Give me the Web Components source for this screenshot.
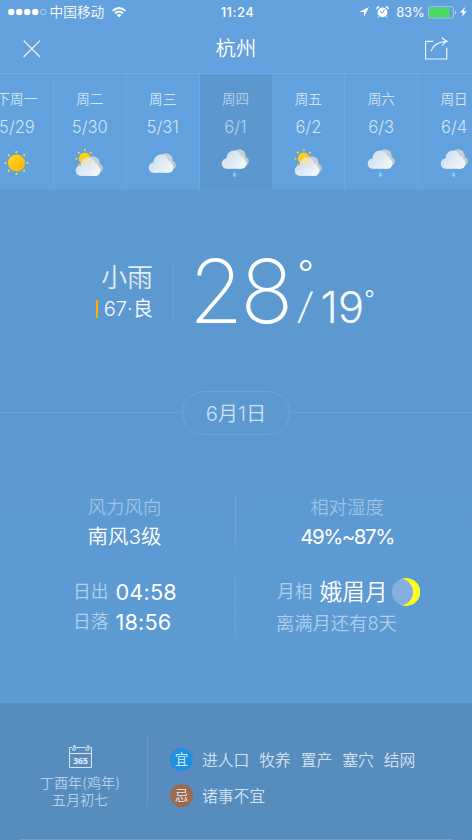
<!DOCTYPE html>
<html lang="zh-CN"><head><meta charset="utf-8"><title>杭州</title>
<style>
html,body{margin:0;width:472px;height:840px;overflow:hidden}
body{font-family:Inter,"Noto Sans CJK SC",sans-serif;font-weight:350;color:#fff}
</style></head><body><weather-page></weather-page>
<script>
const define=(name,html)=>customElements.define(name,class extends HTMLElement{
  constructor(){super();this.attachShadow({mode:'open'}).innerHTML=html;}
});
define('status-bar',`<style>
:host{display:grid;grid-template-columns:1fr auto 1fr;align-items:center;height:24px;font-size:13px;line-height:16px}
.l,.r{display:flex;align-items:center}.l{padding-left:7.5px}.r{justify-content:flex-end;padding-right:5px}
.t{font-weight:500;font-size:13px;letter-spacing:.5px;padding-left:3px}
.c{margin-left:3px;font-size:13.7px}.w{margin-left:8px}.p{margin:0 3.5px 0 7px;font-size:13px;font-weight:400;letter-spacing:-.2px}
svg{display:block}</style>
<div class="l"><svg width="39" height="8" viewBox="0 0 39 8"><g fill="#fff"><circle cx="3.3" cy="4" r="3.2"/><circle cx="11.3" cy="4" r="3.2"/><circle cx="19.3" cy="4" r="3.2"/><circle cx="27.3" cy="4" r="3.2"/></g><circle cx="35.3" cy="4" r="2.8" fill="none" stroke="#d4e5f7" stroke-width=".7"/></svg><span class="c">中国移动</span>
<svg class="w" width="14" height="11" viewBox="0 0 14 11"><g fill="none" stroke="#fff" stroke-width="1.8"><path d="M.6 3.9Q7-1.9 13.4 3.9"/><path d="M2.9 6.4Q7 2.7 11.1 6.4"/></g><path d="M4.6 8.1Q7 6.1 9.4 8.1L7 10.6Z" fill="#fff"/></svg></div>
<span class="t">11:24</span>
<div class="r"><svg width="10" height="10" viewBox="0 0 10 10"><path d="M10 0L0 5.1H4.9V10Z" fill="#fff"/></svg>
<svg style="margin-left:7px" width="13" height="12" viewBox="0 0 13 12"><circle cx="6.5" cy="6.4" r="4.9" fill="#fff"/><path d="M.8 3.2Q1 1 3.2.8M12.2 3.2Q12 1 9.8.8" stroke="#fff" stroke-width="1.4" fill="none"/><path d="M3.9 5.4L6.5 7L8.5 3.6" fill="none" stroke="#629fda" stroke-width="1"/><path d="M3 10.2L2 11.7M10 10.2L11 11.7" stroke="#fff"/></svg>
<span class="p">83%</span>
<svg width="29" height="13" viewBox="0 0 29 13"><rect x=".5" y=".7" width="25" height="11.4" rx="1.8" fill="none" stroke="#a5c9eb"/><rect x="1.2" y="1.4" width="20.5" height="10" rx="1" fill="#4cd964"/><path d="M27 4.3Q29.5 6.5 27 8.7Z" fill="#c6ddf3"/></svg>
<svg style="margin-left:3px" width="7" height="10" viewBox="0 0 7 10"><path d="M5 0L0 5.4H3L1.6 10L7 4.2H4Z" fill="#fff"/></svg></div>`);
define('title-bar',`<style>
:host{display:flex;justify-content:space-between;align-items:center;height:49px;padding:0 24px 0 23px;box-sizing:border-box}
.h{font-size:20.4px;line-height:30px;padding-left:7px}svg{display:block}</style>
<svg width="18" height="18" viewBox="0 0 18 18"><path d="M.7.7L17 17M17 .7L.7 17" stroke="#edf5fc" stroke-width="1.2"/></svg><div class="h"><slot></slot></div>
<svg width="24" height="23" viewBox="0 0 24 23" fill="none" stroke="#edf5fc" stroke-width="1.2"><path d="M9.2 4.4H1.6V22H22.8V10.8"/><path d="M7 14.4C8.7 8.8 14 4.8 22.7 4.3M17.8 .5Q20 3 23 4.3Q20 5.5 18.2 8.7"/></svg>`);
const cloud=(dx,dy)=>`<g transform="translate(${dx} ${dy})"><circle cx="17.3" cy="6.8" r="6.8" fill="#c9ced5"/><circle cx="23.2" cy="12" r="4" fill="url(#gray)"/><g fill="url(#cl)"><circle cx="5.3" cy="14.3" r="5.3"/><circle cx="12.2" cy="8.8" r="7.4"/><circle cx="19.6" cy="14.4" r="5.2"/><circle cx="19.3" cy="9.8" r="2.8"/><path d="M5.3 9H20V19.6H5.3Z"/></g></g>`;
const sun=(x,y,r)=>`<circle cx="${x}" cy="${y}" r="${r}" fill="url(#su)"/><g stroke="#f8d532" stroke-width="${r>7?2:1.6}">${[0,45,90,135,180,225,270,315].map(a=>`<path transform="rotate(${a} ${x} ${y})" d="M${x} ${y-r-1.4}v-2.1"/>`).join('')}</g>`;
customElements.define('weather-icon',class extends HTMLElement{
 constructor(){super();this.attachShadow({mode:'open'});}
 connectedCallback(){const k=this.getAttribute('kind');let b='';
 if(k==='sun')b=sun(17.5,15,8.5);
 if(k==='partly')b=sun(12.9,10.7,6.1)+cloud(3.7,8.3)+`<circle cx="15" cy="13.2" r="4.6" fill="#ffe28c" opacity=".5"/>`;
 if(k==='cloud')b=cloud(3.7,5.2);
 if(k==='rain')b=cloud(3.7,1.2)+`<path d="M16.4 23.4Q20 28.8 16.6 28.8Q13.4 28.6 16.4 23.4" fill="#74d3ff"/>`;
 this.shadowRoot.innerHTML=`<style>:host{display:block;width:34px;height:32px;margin-left:-1px}svg{display:block}</style><svg width="34" height="32" viewBox="0 0 34 32"><defs><linearGradient id="cl" gradientUnits="userSpaceOnUse" x1="3" y1="3" x2="21" y2="20"><stop stop-color="#c9ddf0"/><stop offset="1" stop-color="#f5f7f8"/></linearGradient><linearGradient id="gray"><stop stop-color="#d9dde2"/><stop offset="1" stop-color="#b8c1cc"/></linearGradient><linearGradient id="su" x1="0" y1="0" x2="1" y2="1"><stop stop-color="#ffdb22"/><stop offset="1" stop-color="#ffb000"/></linearGradient></defs>${b}</svg>`;}
});
define('day-cell',`<style>
:host{display:flex;flex-direction:column;align-items:center;box-sizing:border-box;width:72.86px;height:117px;padding-top:15px;border-right:1px solid #6ca8df;background:#61a1dd;color:#d4e5f6}
:host([selected]){background:#5c98cf;color:#b9d2ea;border-color:#5c98cf}
.d{font-size:13.6px;line-height:20px;height:20px;white-space:nowrap}.n{margin-top:8px;font-size:16.6px;line-height:20px;height:20px;margin-bottom:11px}
</style><div class="d"><slot></slot></div><div class="n"><slot name="date"></slot></div><slot name="icon"></slot>`);
define('day-strip',`<style>:host{display:flex;height:117px;border-top:1px solid #6fabdf;border-bottom:1px solid #619dd5;margin-left:-19px;width:510px;box-sizing:border-box;overflow:hidden}slot{display:contents}</style><slot></slot>`);
define('temp-hero',`<style>
:host{display:flex;height:200px;box-sizing:border-box;padding-top:71px;align-items:flex-start}
.l{width:153px;text-align:right;height:62px}.a{font-size:25.9px;line-height:33px;color:#e2edf8}
.b{display:flex;justify-content:flex-end;align-items:center;font-size:20.2px;line-height:30px;color:#f8fafd}
.b i{width:2px;height:18px;background:#ffae00;margin-right:6px}
.v{width:1px;height:62px;background:#6ba2d6;margin:0 15px 0 20px}
.t{display:flex;align-items:flex-start;font-weight:200}
.big{font-size:88px;line-height:62px;height:62px;letter-spacing:-3px;font-weight:200;margin-top:-1px}
.deg{font-size:36px;line-height:34px;height:34px;margin:-5px 0 0 7px;width:1.5px;font-weight:300}
.s{font-size:36px;line-height:40px;font-weight:300;margin-top:25px;width:21.5px;color:#eef5fb}.s b{display:inline-block;font-weight:inherit;transform:skewX(-9deg)}
.low{font-size:44px;line-height:46px;font-weight:300;margin-top:23px;letter-spacing:0;color:#f4f9fd}
.d2{font-size:23px;line-height:22px;font-weight:300;margin-top:27px}
</style><div class="l"><div class="a">小雨</div><div class="b"><i></i><span>67·良</span></div></div><div class="v"></div>
<div class="t"><span class="big">28</span><span class="deg">°</span><span class="s"><b>/</b></span><span class="low">19</span><span class="d2">°</span></div>`);
define('date-pill',`<style>:host{display:flex;align-items:center;height:45px}
i{flex:1;height:1px;background:#6aa3d9}b{font-weight:350;font-size:20.3px;line-height:44px;height:42px;width:106px;text-align:center;border:1px solid #6ea5da;border-radius:23px;color:#d0e1f3}</style><i></i><b><slot></slot></b><i></i>`);
define('detail-grid',`<style>
:host{display:grid;grid-template-columns:235px 1px 236px;grid-template-rows:54px 58px;row-gap:28px;padding-top:60px;height:268px;box-sizing:border-box;background:linear-gradient(#5c99d1,#5d9bd5)}
.v{background:#6ea5d9}.c{display:flex;flex-direction:column;align-items:center}.k{font-size:18.4px;line-height:24px;color:#9dc2e6}
.x{font-size:20.5px;line-height:32px;margin-top:2px}.h{letter-spacing:-1.5px;font-weight:400}.left{width:249px}.right{padding-right:14px}
.r{display:flex;align-items:center;line-height:30px;height:30px}.r .k{font-size:17.7px;margin-right:7px;color:#b4d0ec}.r .x{margin:0;line-height:30px;font-size:21.7px;letter-spacing:.2px}
.sun{padding-left:73px}.sun .x{font-weight:400}.moon{padding-left:41px}.moon .r .x{font-size:22.6px}.m{margin-left:4px;display:block}.f{font-size:18.3px;line-height:32px;color:#b0ceea;margin-left:-1px}
</style>
<div class="c left"><div class="k">风力风向</div><div class="x">南风3级</div></div><div class="v"></div><div class="c right"><div class="k">相对湿度</div><div class="x h">49%~87%</div></div>
<div class="sun"><div class="r"><span class="k">日出</span><span class="x">04:58</span></div><div class="r"><span class="k">日落</span><span class="x">18:56</span></div></div><div class="v"></div>
<div class="moon"><div class="r"><span class="k">月相</span><span class="x">娥眉月</span><svg class="m" width="28" height="28" viewBox="0 0 28 28"><circle cx="14" cy="14" r="14" fill="#84b0df"/><path d="M10 .7A14 14 0 1 1 10 27.3C17 26 21 20 21 14S17 2 10 .7Z" fill="#fcff17"/></svg></div><div class="f">离满月还有8天</div></div>`);
define('almanac-panel',`<style>
:host{display:grid;grid-template-columns:147px 1px 1fr;grid-template-rows:102px 1px;height:137px;box-sizing:border-box;background:#578cbe;padding-top:34px;color:#d3e2f0}
.l{display:flex;flex-direction:column;align-items:center;padding:8px 0 0 13px;font-size:14.1px;line-height:16.5px;color:#b8d0e7}.l svg{margin-bottom:7px;display:block}
svg text{font:700 8.7px "Open Sans",sans-serif;fill:#e4edf6}
.v{height:69px;background:#6999c8}.r{padding:10px 0 0 22px}.o{display:flex;align-items:center;height:24px;margin-bottom:12px;font-size:15.8px}
.k{width:23px;height:23px;border-radius:50%;background:#1e90e1;color:#e5f1fb;font-size:13.5px;text-align:center;line-height:23px;margin-right:9px}.bad{background:#9f6950}.o span+span{margin-left:9.9px}
.line{grid-column:1/-1;height:1px;background:#729fca;margin:0 19px}
</style><div class="l"><svg width="23" height="23" viewBox="0 0 23 23"><g fill="none" stroke="#d7e4f1"><path d="M3 2.5H.5V22.5H22.5V2.5H20.5M6 2.5H17M.5 8.5H22.5"/><path d="M3.5 3.4V5.1H6.2V.7H4.7V3.5M17 3.4V5.1H19.8V.7H18.3V3.5"/></g><text x="11.6" y="18.5" text-anchor="middle">365</text></svg><div>丁酉年(鸡年)</div><div>五月初七</div></div><div class="v"></div><div class="r"><div class="o"><div class="k">宜</div><span>进人口</span><span>牧养</span><span>置产</span><span>塞穴</span><span>结网</span></div><div class="o"><div class="k bad">忌</div><span>诸事不宜</span></div></div><div class="line"></div>`);
define('weather-page',`<style>:host{display:flex;flex-direction:column;width:472px;height:840px;overflow:hidden;background:linear-gradient(#62a1dd 0 189px,#5c99d1 190px)}</style>
<status-bar></status-bar><title-bar>杭州</title-bar><day-strip>${[['下周一','5/29','sun'],['周二','5/30','partly'],['周三','5/31','cloud'],['周四','6/1','rain'],['周五','6/2','partly'],['周六','6/3','rain'],['周日','6/4','rain']].map((d,i)=>`<day-cell${i===3?' selected':''}>${d[0]}<span slot="date">${d[1]}</span><weather-icon slot="icon" kind="${d[2]}"></weather-icon></day-cell>`).join('')}</day-strip>
<temp-hero></temp-hero><date-pill>6月1日</date-pill><detail-grid></detail-grid><almanac-panel></almanac-panel>`);
</script></body></html>
